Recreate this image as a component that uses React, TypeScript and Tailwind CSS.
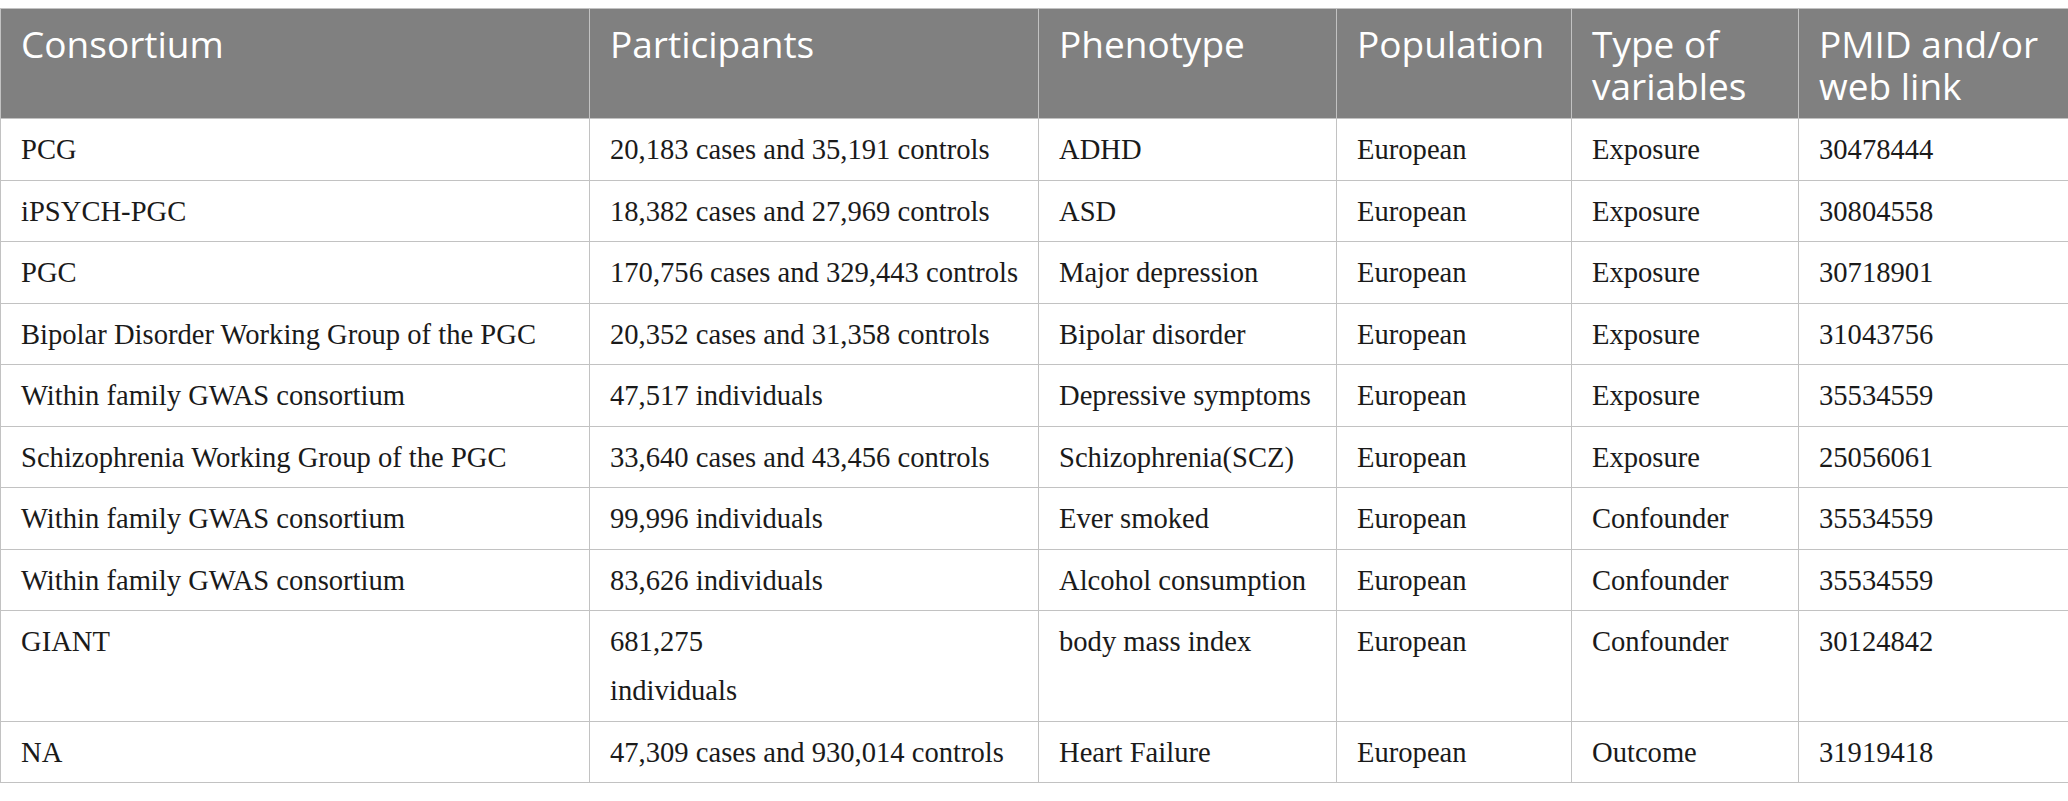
const columns = [
  { label: "Consortium", width: "w-[589px]" },
  { label: "Participants", width: "w-[449px]" },
  { label: "Phenotype", width: "w-[298px]" },
  { label: "Population", width: "w-[235px]" },
  { label: "Type of variables", width: "w-[227px]" },
  { label: "PMID and/or web link", width: "w-[270px]" },
]

const rows: string[][] = [
  ["PCG", "20,183 cases and 35,191 controls", "ADHD", "European", "Exposure", "30478444"],
  ["iPSYCH-PGC", "18,382 cases and 27,969 controls", "ASD", "European", "Exposure", "30804558"],
  ["PGC", "170,756 cases and 329,443 controls", "Major depression", "European", "Exposure", "30718901"],
  ["Bipolar Disorder Working Group of the PGC", "20,352 cases and 31,358 controls", "Bipolar disorder", "European", "Exposure", "31043756"],
  ["Within family GWAS consortium", "47,517 individuals", "Depressive symptoms", "European", "Exposure", "35534559"],
  ["Schizophrenia Working Group of the PGC", "33,640 cases and 43,456 controls", "Schizophrenia(SCZ)", "European", "Exposure", "25056061"],
  ["Within family GWAS consortium", "99,996 individuals", "Ever smoked", "European", "Confounder", "35534559"],
  ["Within family GWAS consortium", "83,626 individuals", "Alcohol consumption", "European", "Confounder", "35534559"],
  ["GIANT", "681,275\nindividuals", "body mass index", "European", "Confounder", "30124842"],
  ["NA", "47,309 cases and 930,014 controls", "Heart Failure", "European", "Outcome", "31919418"],
]

export default function App() {
  return (
    <div className="w-[2068px] min-h-[801px] bg-white pt-[8px]">
      <table className="w-[2068px] table-fixed border-collapse">
        <colgroup>
          {columns.map((c) => (
            <col key={c.label} className={c.width} />
          ))}
        </colgroup>
        <thead>
          <tr className="bg-[#808080]">
            {columns.map((c) => (
              <th
                key={c.label}
                className="border border-[#c2c2c2] px-5 pt-[14px] pb-[11px] h-[110px] align-top text-left font-normal text-white text-[37px] leading-[42px] [font-family:'Open_Sans',sans-serif]"
              >
                {c.label}
              </th>
            ))}
          </tr>
        </thead>
        <tbody>
          {rows.map((row, i) => (
            <tr key={i}>
              {row.map((cell, j) => (
                <td
                  key={j}
                  className="border border-[#c2c2c2] px-5 pt-[6px] pb-[5.5px] align-top text-left text-[#1a1a1a] text-[28.6px] leading-[49px] whitespace-pre [font-family:'Liberation_Serif',serif]"
                >
                  {cell}
                </td>
              ))}
            </tr>
          ))}
        </tbody>
      </table>
    </div>
  )
}
